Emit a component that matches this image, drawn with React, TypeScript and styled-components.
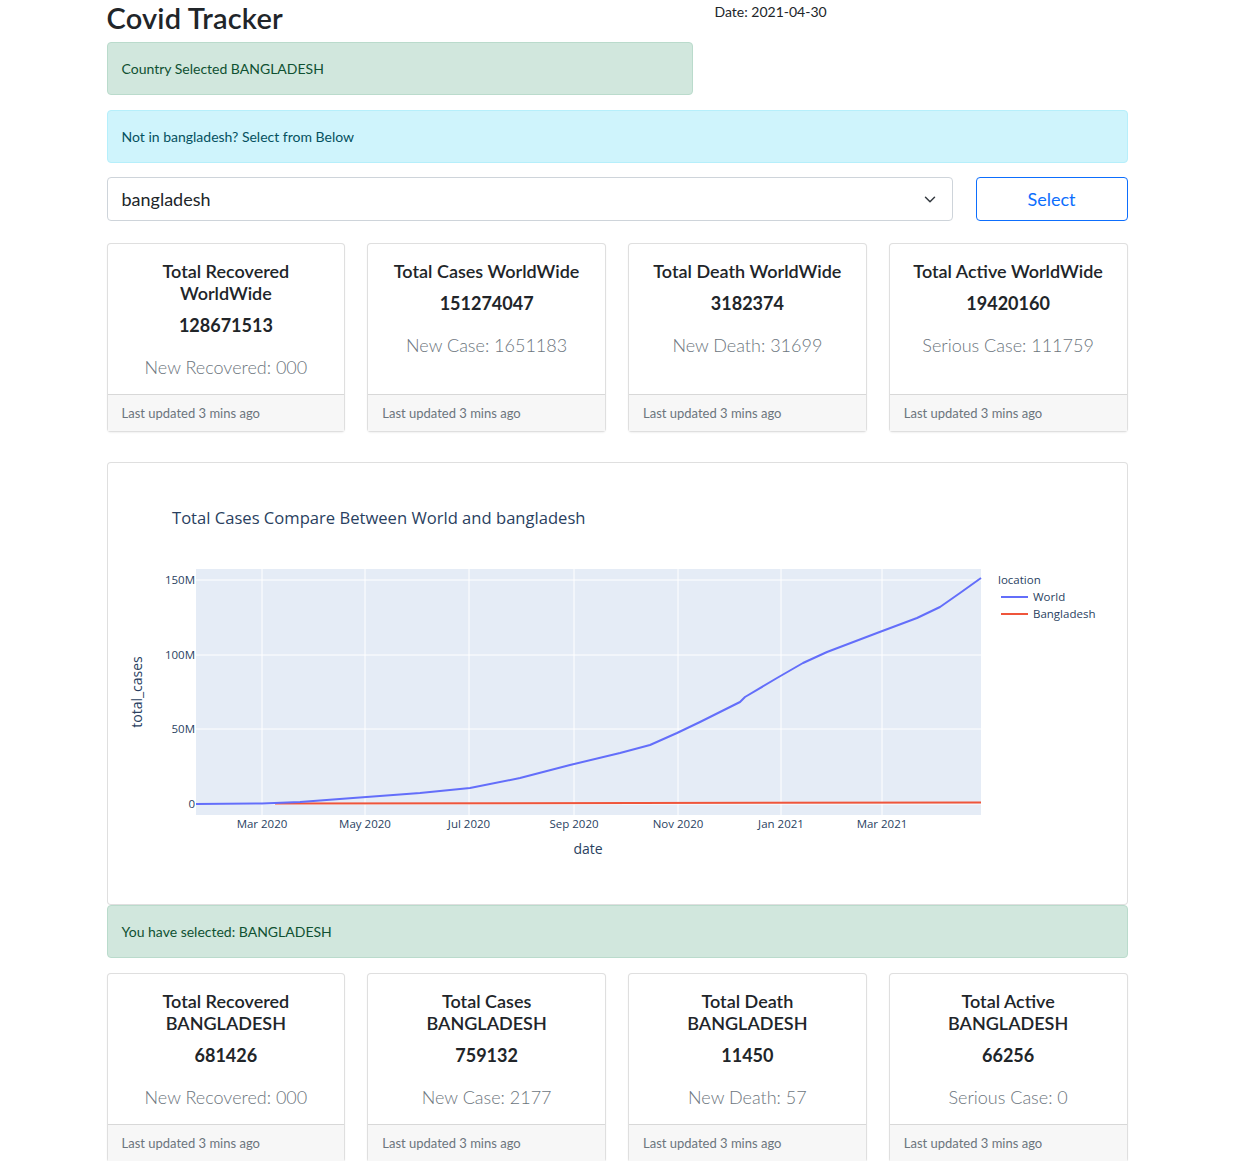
import React from "react";
import styled, { createGlobalStyle } from "styled-components";

const GlobalStyle = createGlobalStyle`
  html, body { margin: 0; padding: 0; background: #fff; }
  body {
    font-family: Lato, "Noto Sans", "Liberation Sans", sans-serif;
    color: #212529;
    font-size: 16px;
    line-height: 1.5;
  }
  * { box-sizing: border-box; }
`;

const Page = styled.div`
  width: 1021px;
  margin: 0 auto;
  padding-bottom: 40px;
`;

const Header = styled.div`
  display: grid;
  grid-template-columns: 586px 1fr;
  column-gap: 22px;
`;

const Title = styled.h1`
  margin: 0 0 7px;
  font-size: 29px;
  font-weight: 600;
  line-height: 35px;
  letter-spacing: 0.2px;
  color: #212529;
`;

const DateText = styled.div`
  font-size: 14px;
  line-height: 21px;
  padding-top: 1px;
`;

const Alert = styled.div<{ $variant: "success" | "info"; $gap?: number }>`
  padding: 15px 14px;
  border-radius: 4px;
  font-size: 14px;
  line-height: 21px;
  margin-bottom: ${(p) => (p.$gap ?? 15)}px;
  border: 1px solid ${(p) => (p.$variant === "success" ? "#badbcc" : "#b6effb")};
  background: ${(p) => (p.$variant === "success" ? "#d1e7dd" : "#cff4fc")};
  color: ${(p) => (p.$variant === "success" ? "#0f5132" : "#055160")};
`;

const SelectRow = styled.div`
  display: flex;
  gap: 23px;
  margin-bottom: 22px;
`;

const SelectBox = styled.div`
  flex: 1;
  height: 44px;
  border: 1px solid #ced4da;
  border-radius: 4px;
  display: flex;
  align-items: center;
  justify-content: space-between;
  padding: 0 16px 0 14px;
  font-size: 18px;
  color: #212529;
`;

const SelectButton = styled.button`
  width: 152px;
  height: 44px;
  border: 1px solid #0d6efd;
  border-radius: 4px;
  background: #fff;
  color: #0d6efd;
  font-family: inherit;
  font-size: 18px;
`;

const CardGrid = styled.div`
  display: grid;
  grid-template-columns: repeat(4, 1fr);
  column-gap: 22px;
`;

const Card = styled.div`
  border: 1px solid rgba(0, 0, 0, 0.125);
  border-radius: 4px;
  display: flex;
  flex-direction: column;
  box-shadow: 0 1px 2px rgba(0, 0, 0, 0.06);
  background: #fff;
  height: 189px;
`;

const CardBody = styled.div`
  flex: 1;
  padding: 16px 14px 0;
  text-align: center;
`;

const CardTitle = styled.div`
  font-size: 18px;
  font-weight: 600;
  line-height: 22px;
  color: #212529;
`;

const CardValue = styled.div`
  font-size: 18px;
  font-weight: 700;
  line-height: 22px;
  margin-top: 10px;
  color: #212529;
`;

const CardSub = styled.div`
  font-size: 18px;
  font-weight: 300;
  line-height: 27px;
  margin-top: 18px;
  color: #6c757d;
`;

const CardFooter = styled.div`
  height: 37px;
  border-top: 1px solid rgba(0, 0, 0, 0.125);
  background: #f7f7f7;
  padding: 1px 14px 0;
  display: flex;
  align-items: center;
  font-size: 13px;
  color: #6c757d;
`;

const ChartCard = styled.div`
  margin-top: 30px;
  border: 1px solid rgba(0, 0, 0, 0.125);
  border-radius: 4px;
  height: 443px;
  background: #fff;
`;

const ChartSvg = styled.svg`
  display: block;
  font-family: "Open Sans", verdana, arial, sans-serif;
`;

type Stat = { title: React.ReactNode; value: string; sub: string };

const world: Stat[] = [
  { title: <>Total Recovered<br />WorldWide</>, value: "128671513", sub: "New Recovered: 000" },
  { title: "Total Cases WorldWide", value: "151274047", sub: "New Case: 1651183" },
  { title: "Total Death WorldWide", value: "3182374", sub: "New Death: 31699" },
  { title: "Total Active WorldWide", value: "19420160", sub: "Serious Case: 111759" },
];

const local: Stat[] = [
  { title: <>Total Recovered<br />BANGLADESH</>, value: "681426", sub: "New Recovered: 000" },
  { title: <>Total Cases<br />BANGLADESH</>, value: "759132", sub: "New Case: 2177" },
  { title: <>Total Death<br />BANGLADESH</>, value: "11450", sub: "New Death: 57" },
  { title: <>Total Active<br />BANGLADESH</>, value: "66256", sub: "Serious Case: 0" },
];

const StatCards: React.FC<{ items: Stat[] }> = ({ items }) => (
  <CardGrid>
    {items.map((s, i) => (
      <Card key={i}>
        <CardBody>
          <CardTitle>{s.title}</CardTitle>
          <CardValue>{s.value}</CardValue>
          <CardSub>{s.sub}</CardSub>
        </CardBody>
        <CardFooter>Last updated 3 mins ago</CardFooter>
      </Card>
    ))}
  </CardGrid>
);

// chart coordinates relative to card inner origin (page x-108, y-463)
const OX = 108;
const OY = 463;
const worldPts: [number, number][] = [
  [196, 804], [262, 803.5], [300, 802], [353, 798], [420, 793], [470, 788],
  [520, 778], [570, 765], [620, 753], [650, 745], [677, 733], [700, 722],
  [740, 702], [745, 697], [777, 678], [803, 663], [827, 652], [877, 633],
  [917, 618], [940, 607], [960, 593], [981, 578],
];

const Chart: React.FC = () => {
  const px = (x: number) => x - OX;
  const py = (y: number) => y - OY;
  const plotL = px(196), plotR = px(981), plotT = py(569), plotB = py(815);
  const yTicks: [number, string][] = [[580, "150M"], [655, "100M"], [729, "50M"], [804, "0"]];
  const xTicks: [number, string][] = [
    [262, "Mar 2020"], [365, "May 2020"], [469, "Jul 2020"], [574, "Sep 2020"],
    [678, "Nov 2020"], [781, "Jan 2021"], [882, "Mar 2021"],
  ];
  const worldPath = worldPts.map((p, i) => `${i ? "L" : "M"}${px(p[0])},${py(p[1])}`).join(" ");
  return (
    <ChartSvg width={1019} height={441} viewBox="0 0 1019 441">
      <text x={px(172)} y={py(524)} fontSize={16.6} fill="#2a3f5f">
        Total Cases Compare Between World and bangladesh
      </text>
      <rect x={plotL} y={plotT} width={plotR - plotL} height={plotB - plotT} fill="#e5ecf6" />
      {xTicks.map(([x]) => (
        <line key={x} x1={px(x)} x2={px(x)} y1={plotT} y2={plotB} stroke="#fff" strokeWidth={1} />
      ))}
      {yTicks.map(([y]) => (
        <line key={y} x1={plotL} x2={plotR} y1={py(y)} y2={py(y)} stroke="#fff" strokeWidth={1} />
      ))}
      {yTicks.map(([y, l]) => (
        <text key={l} x={px(195)} y={py(y) + 4} fontSize={11.5} fill="#2a3f5f" textAnchor="end">
          {l}
        </text>
      ))}
      {xTicks.map(([x, l]) => (
        <text key={l} x={px(x)} y={py(828)} fontSize={11.5} fill="#2a3f5f" textAnchor="middle">
          {l}
        </text>
      ))}
      <text x={px(588)} y={py(854)} fontSize={14} fill="#2a3f5f" textAnchor="middle">
        date
      </text>
      <text
        x={0}
        y={0}
        fontSize={14}
        fill="#2a3f5f"
        textAnchor="middle"
        transform={`translate(${px(142)},${py(692)}) rotate(-90)`}
      >
        total_cases
      </text>
      <path d={`M${px(275)},${py(803.5)} L${px(981)},${py(802.5)}`} stroke="#ef553b" strokeWidth={2} fill="none" />
      <path d={worldPath} stroke="#636efa" strokeWidth={2} fill="none" strokeLinejoin="round" />
      <text x={px(998)} y={py(584)} fontSize={11.5} fill="#2a3f5f">location</text>
      <line x1={px(1001)} x2={px(1028)} y1={py(597)} y2={py(597)} stroke="#636efa" strokeWidth={2} />
      <text x={px(1033)} y={py(601)} fontSize={11.5} fill="#2a3f5f">World</text>
      <line x1={px(1001)} x2={px(1028)} y1={py(614)} y2={py(614)} stroke="#ef553b" strokeWidth={2} />
      <text x={px(1033)} y={py(618)} fontSize={11.5} fill="#2a3f5f">Bangladesh</text>
    </ChartSvg>
  );
};

const Chevron = () => (
  <svg width="12" height="9" viewBox="0 0 16 12">
    <path d="m2 3 6 6 6-6" fill="none" stroke="#343a40" strokeWidth="2" strokeLinecap="round" strokeLinejoin="round" />
  </svg>
);

export default function App() {
  return (
    <>
      <GlobalStyle />
      <Page>
        <Header>
          <div>
            <Title>Covid Tracker</Title>
            <Alert $variant="success">Country Selected BANGLADESH</Alert>
          </div>
          <DateText>Date: 2021-04-30</DateText>
        </Header>
        <Alert $variant="info" $gap={14}>Not in bangladesh? Select from Below</Alert>
        <SelectRow>
          <SelectBox>
            <span>bangladesh</span>
            <Chevron />
          </SelectBox>
          <SelectButton>Select</SelectButton>
        </SelectRow>
        <StatCards items={world} />
        <ChartCard>
          <Chart />
        </ChartCard>
        <Alert $variant="success">You have selected: BANGLADESH</Alert>
        <StatCards items={local} />
      </Page>
    </>
  );
}
